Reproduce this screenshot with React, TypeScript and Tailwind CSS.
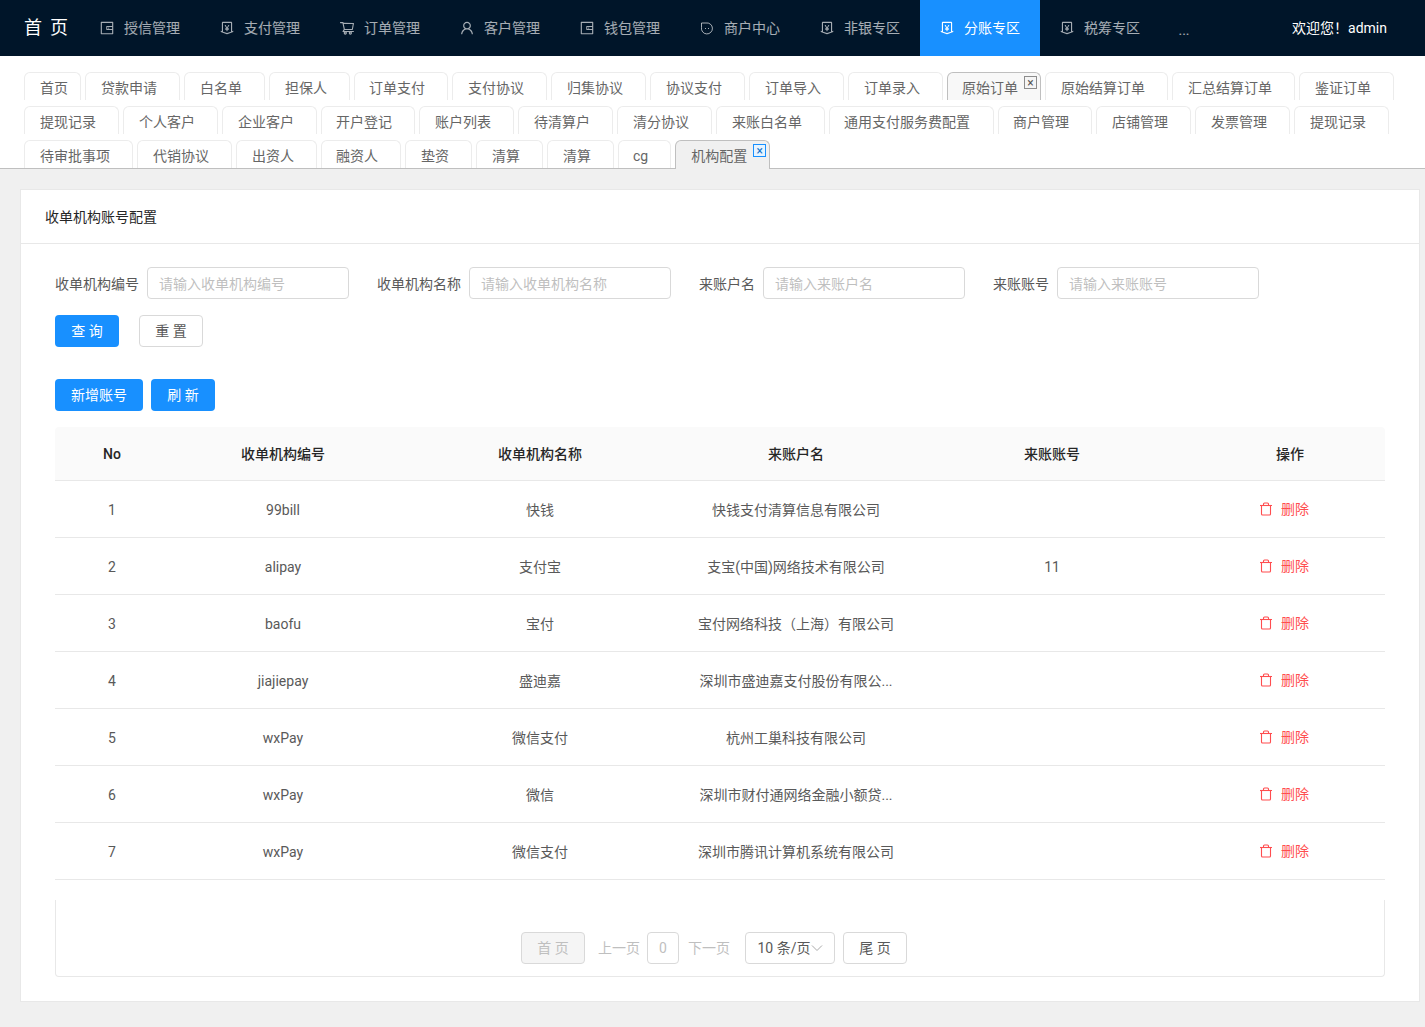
import React from "react";
import { AiOutlineWallet, AiOutlineMoneyCollect, AiOutlineShoppingCart, AiOutlineUser } from "react-icons/ai";

const FONT = { fontFamily: 'Roboto, "Noto Sans CJK SC", sans-serif' };

function Wallet() {
  return <AiOutlineWallet size={16} className="-mx-px shrink-0" />;
}
function Shield() {
  return <AiOutlineMoneyCollect size={16} className="-mx-px shrink-0" />;
}
function Cart() {
  return <AiOutlineShoppingCart size={16} className="-mx-px shrink-0" />;
}
function User() {
  return <AiOutlineUser size={16} className="-mx-px shrink-0" />;
}
function Drop() {
  return (
    <svg width="14" height="14" viewBox="0 0 14 14" fill="none" stroke="currentColor" strokeWidth="1" className="shrink-0">
      <path d="M1.500 2h4.500a5.500 5.500 0 1 1-4.500 4.500z" />
      <path d="M5.500 7v1M8.500 7v1" />
    </svg>
  );
}
function Trash() {
  return (
    <svg width="14" height="14" viewBox="0 0 14 14" fill="none" stroke="currentColor" strokeWidth="1.1" className="shrink-0">
      <path d="M1 3.500h12" />
      <path d="M2.500 3.500v8.500a1 1 0 0 0 1 1h7a1 1 0 0 0 1-1v-8.500" />
      <path d="M4.500 3.500v-1.500a1 1 0 0 1 1-1h3a1 1 0 0 1 1 1v1.500" />
    </svg>
  );
}

const menu: [string, React.FC][] = [
  ["授信管理", Wallet],
  ["支付管理", Shield],
  ["订单管理", Cart],
  ["客户管理", User],
  ["钱包管理", Wallet],
  ["商户中心", Drop],
  ["非银专区", Shield],
  ["分账专区", Shield],
  ["税筹专区", Shield],
];

const N = "pl-[15px] pr-[22px]";
const S = "pl-[14px] pr-[22px]";

const tabs: [string, string][] = [
  ["首页", "pl-[15px] pr-3"], ["贷款申请", N], ["白名单", N], ["担保人", N], ["订单支付", S], ["支付协议", N], ["归集协议", N], ["协议支付", N], ["订单导入", N], ["订单录入", N], ["原始订单", S], ["原始结算订单", N], ["汇总结算订单", N], ["鉴证订单", N],
  ["提现记录", N], ["个人客户", N], ["企业客户", N], ["开户登记", S], ["账户列表", N], ["待清算户", N], ["清分协议", N], ["来账白名单", N], ["通用支付服务费配置", "pl-[14px] pr-[23px]"], ["商户管理", S], ["店铺管理", N], ["发票管理", N], ["提现记录", N],
  ["待审批事项", N], ["代销协议", N], ["出资人", N], ["融资人", S], ["垫资", N], ["清算", N], ["清算", N], ["cg", S], ["机构配置", N],
];

const rows = [
  ["1", "99bill", "快钱", "快钱支付清算信息有限公司", ""],
  ["2", "alipay", "支付宝", "支宝(中国)网络技术有限公司", "11"],
  ["3", "baofu", "宝付", "宝付网络科技（上海）有限公司", ""],
  ["4", "jiajiepay", "盛迪嘉", "深圳市盛迪嘉支付股份有限公...", ""],
  ["5", "wxPay", "微信支付", "杭州工巢科技有限公司", ""],
  ["6", "wxPay", "微信", "深圳市财付通网络金融小额贷...", ""],
  ["7", "wxPay", "微信支付", "深圳市腾讯计算机系统有限公司", ""],
];

const fields = [
  ["收单机构编号", "请输入收单机构编号"],
  ["收单机构名称", "请输入收单机构名称"],
  ["来账户名", "请输入来账户名"],
  ["来账账号", "请输入来账账号"],
];

function CloseBox({ blue }: { blue?: boolean }) {
  return (
    <span
      className={
        "absolute right-[3px] top-[3px] flex h-[13px] w-[13px] items-center justify-center border text-xs leading-none " +
        (blue ? "border-[#1890ff] bg-[#e6f4ff] text-[#1270c8]" : "border-[#8c8c8c] bg-[#f5f5f5] text-[#555]")
      }
    >
      ×
    </span>
  );
}

export default function App() {
  return (
    <div style={FONT} className="min-h-[1027px] bg-[#f0f0f0] text-sm text-[#595959]">
      <header className="flex h-14 items-center bg-[#001529]">
        <div className="w-20 shrink-0 pl-6 text-lg tracking-[8px] text-white">首页</div>
        {menu.map(([label, Icon], i) => (
          <div
            key={label}
            className={
              "flex h-14 w-[120px] shrink-0 items-center gap-[10px] pl-5 " +
              (i === 7 ? "bg-[#1890ff] text-white" : "text-white/65")
            }
          >
            <Icon />
            <span>{label}</span>
          </div>
        ))}
        <div className="flex h-14 w-10 shrink-0 items-center justify-center pl-2 pt-1 text-white/65">...</div>
        <div className="ml-auto pr-[38px] text-white">欢迎您！admin</div>
      </header>

      <nav className="flex flex-wrap content-start gap-x-1 gap-y-[6px] border-b border-[#bfbfbf] bg-white px-6 pt-4">
        {tabs.map(([label, pad], i) => {
          const orig = i === 10;
          const cur = i === 35;
          return (
            <div
              key={i}
              className={
                "relative flex h-7 items-center rounded-t-md border border-b-0 pt-0.5 leading-none " +
                pad +
                " " +
                (cur
                  ? "z-10 -mb-px h-[29px] border-[#bfbfbf] bg-[#f0f0f0]"
                  : orig
                    ? "border-[#bfbfbf] bg-[#f8f8f8]"
                    : "border-[#ececec] bg-white")
              }
            >
              <span className="text-[#666]">{label}</span>
              {cur && <CloseBox blue />}
              {orig && <CloseBox />}
            </div>
          );
        })}
      </nav>

      <main className="ml-[20px] mr-[5px] mt-5 border border-[#e8e8e8] bg-white">
        <div className="flex h-[54px] items-center border-b border-[#e8e8e8] pl-6 text-[#262626]">收单机构账号配置</div>
        <div className="px-[34px] pb-6 pt-[23px]">
          <div className="flex items-center">
            {fields.map(([l, p]) => (
              <div key={l} className="mr-7 flex items-center gap-2">
                <label className="pt-0.5 text-[#595959]">{l}</label>
                <div className="flex h-8 w-[202px] items-center rounded border border-[#d9d9d9] px-[11px] pt-0.5 text-[#bfbfbf]">{p}</div>
              </div>
            ))}
          </div>
          <div className="mt-4 flex gap-5">
            <button className="h-8 w-16 rounded bg-[#1890ff] text-white">查 询</button>
            <button className="h-8 w-16 rounded border border-[#d9d9d9] bg-white text-[#595959]">重 置</button>
          </div>
          <div className="mt-8 flex gap-2">
            <button className="h-8 w-[88px] rounded bg-[#1890ff] text-white">新增账号</button>
            <button className="h-8 w-16 rounded bg-[#1890ff] text-white">刷 新</button>
          </div>

          <table className="mt-4 w-[1330px] table-fixed border-separate border-spacing-0 text-center">
            <colgroup>
              <col className="w-[114px]" />
              <col className="w-[228px]" />
              <col className="w-[286px]" />
              <col className="w-[226px]" />
              <col className="w-[286px]" />
              <col className="w-[190px]" />
            </colgroup>
            <thead>
              <tr>
                {["No", "收单机构编号", "收单机构名称", "来账户名", "来账账号", "操作"].map((h) => (
                  <th
                    key={h}
                    className="h-[54px] border-b border-[#e8e8e8] bg-[#fafafa] font-medium text-[#262626] first:rounded-tl last:rounded-tr"
                  >
                    {h}
                  </th>
                ))}
              </tr>
            </thead>
            <tbody>
              {rows.map((r) => (
                <tr key={r[0]}>
                  {r.map((c, i) => (
                    <td key={i} className="h-[57px] border-b border-[#e8e8e8] pt-0.5">{c}</td>
                  ))}
                  <td className="h-[57px] border-b border-[#e8e8e8] pt-0.5">
                    <span className="mb-[2px] mr-3 inline-flex items-center gap-2 text-[#ff4d4f]">
                      <Trash />
                      <span>删除</span>
                    </span>
                  </td>
                </tr>
              ))}
            </tbody>
          </table>

          <div className="mt-5 flex h-[77px] w-[1330px] items-start justify-center gap-2 rounded-b border border-t-0 border-[#e8e8e8] pr-3 pt-8">
            <button className="h-8 w-16 rounded border border-[#d9d9d9] bg-[#f5f5f5] text-[#bfbfbf]">首 页</button>
            <span className="ml-[5px] flex h-8 items-center text-[#bfbfbf]">上一页</span>
            <span className="-ml-px flex h-8 w-8 items-center justify-center rounded border border-[#d9d9d9] text-[#bfbfbf]">0</span>
            <span className="ml-px flex h-8 items-center text-[#bfbfbf]">下一页</span>
            <span className="ml-[7px] flex h-8 w-[90px] items-center justify-center rounded border border-[#d9d9d9] text-[#595959]">
              10 条/页
              <svg width="12" height="12" viewBox="0 0 12 12" fill="none" stroke="#aaaaaa" strokeWidth="1">
                <path d="M1 3.500l5 5 5-5" />
              </svg>
            </span>
            <button className="h-8 w-16 rounded border border-[#d9d9d9] bg-white text-[#595959]">尾 页</button>
          </div>
        </div>
      </main>
    </div>
  );
}
